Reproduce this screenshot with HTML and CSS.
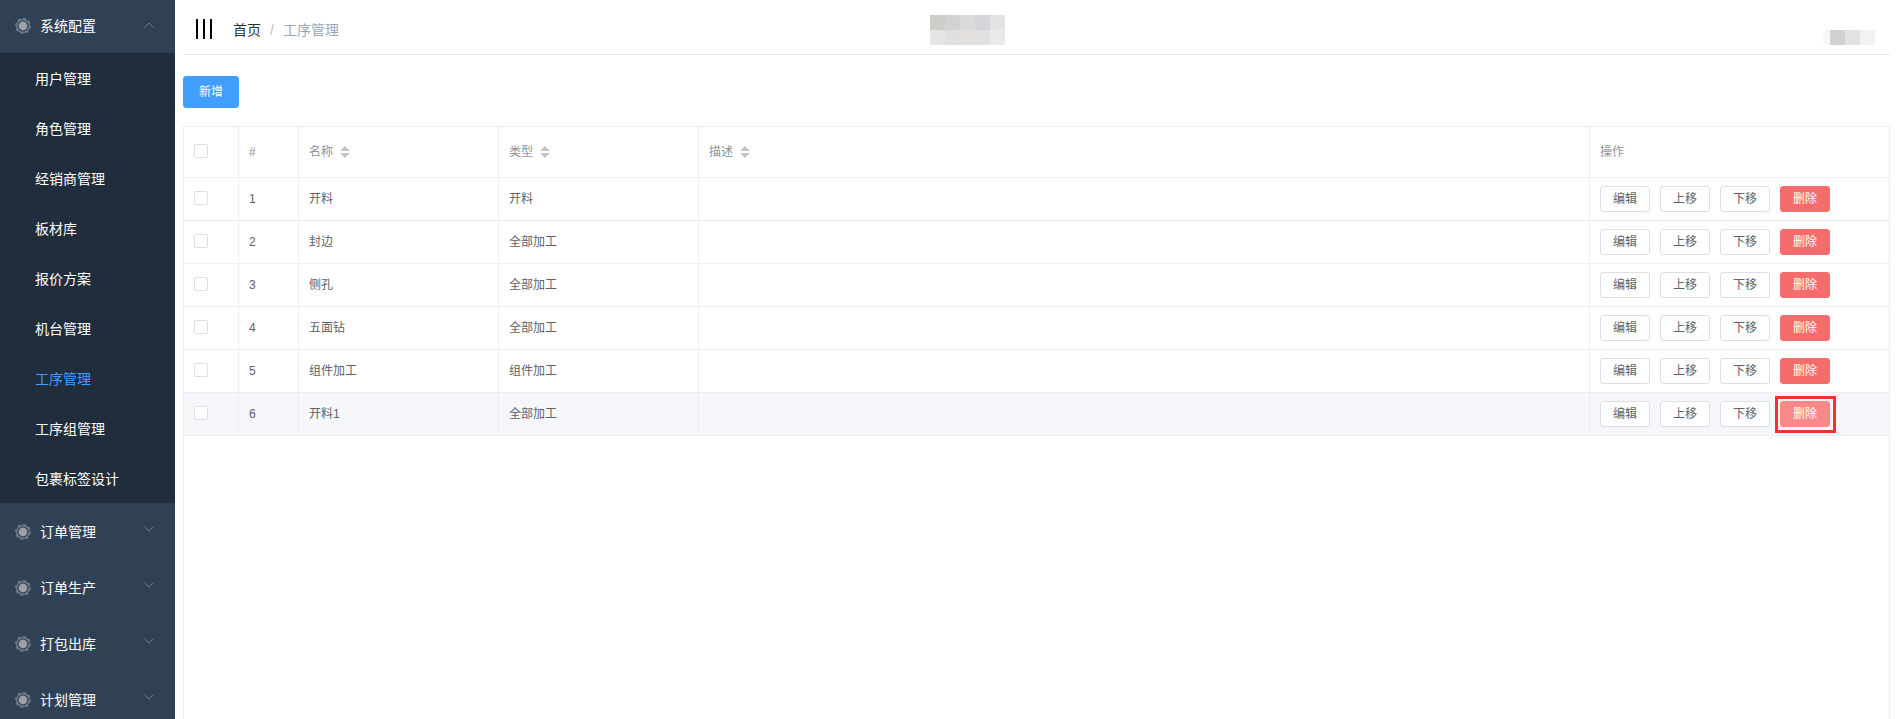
FILE: index.html
```html
<!DOCTYPE html>
<html lang="zh-CN">
<head>
<meta charset="UTF-8">
<title>工序管理</title>
<link rel="stylesheet" href="styles.css">
</head>
<body>
<svg class="defs" width="0" height="0">
  <defs>
    <g id="gear">
      <circle cx="8" cy="8" r="6.3" fill="none" stroke="#7a828e" stroke-width="1.2"/>
      <circle cx="8" cy="8" r="7.3" fill="none" stroke="#7a828e" stroke-width="1.2" stroke-dasharray="2.9 2.83"/>
      <circle cx="8" cy="8" r="4.4" fill="#9da0a6"/>
    </g>
  </defs>
</svg>

<div class="layout">
  <!-- 侧边栏 -->
  <aside class="sidebar">
    <div class="menu-title menu-title-first">
      <svg class="menu-icon" width="16" height="16"><use href="#gear"/></svg>
      <span>系统配置</span>
      <svg class="menu-arrow" width="10" height="6"><polyline points="0.5,5.5 5,1 9.5,5.5" fill="none" stroke="#717c8b"/></svg>
    </div>
    <ul class="submenu">
      <li>用户管理</li>
      <li>角色管理</li>
      <li>经销商管理</li>
      <li>板材库</li>
      <li>报价方案</li>
      <li>机台管理</li>
      <li class="active">工序管理</li>
      <li>工序组管理</li>
      <li>包裹标签设计</li>
    </ul>
    <div class="menu-title">
      <svg class="menu-icon" width="16" height="16"><use href="#gear"/></svg>
      <span>订单管理</span>
      <svg class="menu-arrow" width="10" height="6"><polyline points="0.5,0.5 5,5 9.5,0.5" fill="none" stroke="#717c8b"/></svg>
    </div>
    <div class="menu-title">
      <svg class="menu-icon" width="16" height="16"><use href="#gear"/></svg>
      <span>订单生产</span>
      <svg class="menu-arrow" width="10" height="6"><polyline points="0.5,0.5 5,5 9.5,0.5" fill="none" stroke="#717c8b"/></svg>
    </div>
    <div class="menu-title">
      <svg class="menu-icon" width="16" height="16"><use href="#gear"/></svg>
      <span>打包出库</span>
      <svg class="menu-arrow" width="10" height="6"><polyline points="0.5,0.5 5,5 9.5,0.5" fill="none" stroke="#717c8b"/></svg>
    </div>
    <div class="menu-title">
      <svg class="menu-icon" width="16" height="16"><use href="#gear"/></svg>
      <span>计划管理</span>
      <svg class="menu-arrow" width="10" height="6"><polyline points="0.5,0.5 5,5 9.5,0.5" fill="none" stroke="#717c8b"/></svg>
    </div>
  </aside>

  <main class="main">
    <!-- 顶部 -->
    <header class="navbar">
      <div class="navbar-left">
        <div class="hamburger"><i></i><i></i><i></i></div>
        <div class="breadcrumb">
          <span class="crumb">首页</span>
          <span class="crumb-sep">/</span>
          <span class="crumb-current">工序管理</span>
        </div>
      </div>
      <div class="mosaic-title">
        <i></i><i></i><i></i><i></i><i></i>
        <i></i><i></i><i></i><i></i><i></i>
      </div>
      <div class="mosaic-user"><i></i><i></i><i></i><i></i></div>
    </header>

    <section class="content">
      <button class="btn btn-primary btn-add">新增</button>

      <div class="table-wrap">
        <table class="table">
          <colgroup>
            <col class="col-check"><col class="col-index"><col class="col-name">
            <col class="col-type"><col class="col-desc"><col class="col-ops">
          </colgroup>
          <thead>
            <tr>
              <th><span class="checkbox"></span></th>
              <th>#</th>
              <th><div class="th-sort">名称<span class="sort"><i class="up"></i><i class="down"></i></span></div></th>
              <th><div class="th-sort">类型<span class="sort"><i class="up"></i><i class="down"></i></span></div></th>
              <th><div class="th-sort">描述<span class="sort"><i class="up"></i><i class="down"></i></span></div></th>
              <th>操作</th>
            </tr>
          </thead>
          <tbody>
            <tr>
              <td><span class="checkbox"></span></td><td>1</td><td>开料</td><td>开料</td><td></td>
              <td><div class="ops"><button class="btn">编辑</button><button class="btn">上移</button><button class="btn">下移</button><button class="btn btn-danger">删除</button></div></td>
            </tr>
            <tr>
              <td><span class="checkbox"></span></td><td>2</td><td>封边</td><td>全部加工</td><td></td>
              <td><div class="ops"><button class="btn">编辑</button><button class="btn">上移</button><button class="btn">下移</button><button class="btn btn-danger">删除</button></div></td>
            </tr>
            <tr>
              <td><span class="checkbox"></span></td><td>3</td><td>侧孔</td><td>全部加工</td><td></td>
              <td><div class="ops"><button class="btn">编辑</button><button class="btn">上移</button><button class="btn">下移</button><button class="btn btn-danger">删除</button></div></td>
            </tr>
            <tr>
              <td><span class="checkbox"></span></td><td>4</td><td>五面钻</td><td>全部加工</td><td></td>
              <td><div class="ops"><button class="btn">编辑</button><button class="btn">上移</button><button class="btn">下移</button><button class="btn btn-danger">删除</button></div></td>
            </tr>
            <tr>
              <td><span class="checkbox"></span></td><td>5</td><td>组件加工</td><td>组件加工</td><td></td>
              <td><div class="ops"><button class="btn">编辑</button><button class="btn">上移</button><button class="btn">下移</button><button class="btn btn-danger">删除</button></div></td>
            </tr>
            <tr class="row-hover">
              <td><span class="checkbox"></span></td><td>6</td><td>开料1</td><td>全部加工</td><td></td>
              <td><div class="ops"><button class="btn">编辑</button><button class="btn">上移</button><button class="btn">下移</button><span class="marked"><button class="btn btn-danger btn-danger-hover">删除</button></span></div></td>
            </tr>
          </tbody>
        </table>
      </div>
    </section>
  </main>
</div>
</body>
</html>
```

FILE: styles.css
```css
* { margin: 0; padding: 0; box-sizing: border-box; }

html, body { height: 100%; overflow: hidden; }

body {
  background: #fff;
  color: #606266;
  font-family: "Liberation Sans", "Noto Sans CJK SC", sans-serif;
  font-size: 12px;
  line-height: 20px;
}

.defs { position: absolute; }

.layout { display: flex; height: 100%; }

/* 侧边栏 */
.sidebar {
  width: 175px;
  flex-shrink: 0;
  background: #304156;
  overflow: hidden;
}
.menu-title {
  display: flex;
  align-items: center;
  height: 56px;
  padding: 2px 0 0 15px;
  color: #fff;
  font-size: 14px;
}
.menu-title-first { height: 53px; padding: 0 0 1px 15px; }
.menu-icon { margin-right: 9px; flex-shrink: 0; }
.menu-arrow { margin-left: auto; margin-right: 21px; margin-top: -6px; }
.menu-title-first .menu-arrow { margin-top: -3px; }

.submenu { list-style: none; background: #1f2d3d; }
.submenu li {
  height: 50px;
  line-height: 52px;
  padding-left: 35px;
  color: #fff;
  font-size: 14px;
}
.submenu li.active { color: #409eff; }

/* 主体 */
.main {
  flex: 1;
  min-width: 0;
  display: flex;
  flex-direction: column;
  padding: 0 7px 0 8px;
}
.navbar {
  display: flex;
  height: 55px;
  flex-shrink: 0;
  border-bottom: 1px solid #e6e6e9;
}
.navbar-left {
  width: 747px;
  display: flex;
  align-items: flex-start;
  padding-left: 13px;
}
.hamburger { display: flex; gap: 5px; margin-top: 19px; margin-right: 21px; }
.hamburger i { width: 2px; height: 20px; background: #000; }

.breadcrumb {
  display: flex;
  gap: 9px;
  font-size: 14px;
  margin-top: 20px;
}
.crumb { color: #303133; }
.crumb-sep { color: #c0c4cc; }
.crumb-current { color: #97a8be; }

/* 打码区域 */
.mosaic-title {
  display: grid;
  grid-template-columns: repeat(5, 15px);
  grid-auto-rows: 15px;
  margin-top: 15px;
  height: 30px;
}
.mosaic-title i:nth-child(1) { background: #cfcdca; }
.mosaic-title i:nth-child(2) { background: #d1d3d3; }
.mosaic-title i:nth-child(3) { background: #dcdad8; }
.mosaic-title i:nth-child(4) { background: #d3d5d8; }
.mosaic-title i:nth-child(5) { background: #e3e3e4; }
.mosaic-title i:nth-child(6) { background: #e5e5e5; }
.mosaic-title i:nth-child(7) { background: #dedfe0; }
.mosaic-title i:nth-child(8) { background: #e3e0de; }
.mosaic-title i:nth-child(9) { background: #e0e1e3; }
.mosaic-title i:nth-child(10) { background: #e9eaea; }

.mosaic-user {
  display: grid;
  grid-template-columns: 8px 15px 15px 15px;
  height: 15px;
  margin: 30px 15px 0 auto;
}
.mosaic-user i:nth-child(1) { background: #f8f7f5; border-radius: 8px 0 0 8px; }
.mosaic-user i:nth-child(2) { background: #d0d1d3; }
.mosaic-user i:nth-child(3) { background: #e1e2e4; }
.mosaic-user i:nth-child(4) { background: #f2f2f2; }

.content {
  flex: 1;
  min-height: 0;
  display: flex;
  flex-direction: column;
  padding-top: 21px;
}

/* 按钮 */
.btn {
  display: block;
  width: 50px;
  height: 26px;
  background: #fff;
  border: 1px solid #dcdfe6;
  border-radius: 3px;
  color: #606266;
  font-family: inherit;
  font-size: 12px;
  line-height: 1;
}
.btn-primary { background: #409eff; border-color: #409eff; color: #fff; }
.btn-add { width: 56px; height: 32px; flex-shrink: 0; margin-bottom: 18px; }
.btn-danger { background: #f56c6c; border-color: #f56c6c; color: #fff; }
.btn-danger-hover { background: #f78989; border-color: #f78989; }

/* 表格 */
.table-wrap {
  flex: 1;
  border: 1px solid #ebeef5;
  border-bottom: 0;
}
.table {
  width: 100%;
  table-layout: fixed;
  border-collapse: separate;
  border-spacing: 0;
}
.col-check { width: 55px; }
.col-index { width: 60px; }
.col-name, .col-type { width: 200px; }
.col-ops { width: 299px; }

.table th, .table td {
  padding: 0 10px;
  border-right: 1px solid #ebeef5;
  border-bottom: 1px solid #ebeef5;
  text-align: left;
  vertical-align: middle;
  font-size: 12px;
  font-weight: 400;
}
.table th { height: 51px; color: #909399; }
.table td { height: 43px; color: #606266; }
.table th:last-child, .table td:last-child { border-right: 0; }
.row-hover td { background: #f5f7fa; }

.checkbox {
  display: block;
  width: 14px;
  height: 14px;
  margin-top: -2px;
  background: #fff;
  border: 1px solid #dcdfe6;
  border-radius: 2px;
}

.th-sort { display: flex; align-items: center; }
.sort {
  display: flex;
  flex-direction: column;
  gap: 2px;
  margin-left: 7px;
}
.sort i { width: 0; height: 0; border: 5px solid transparent; }
.sort .up { border-top: 0; border-bottom-color: #c0c4cc; }
.sort .down { border-bottom: 0; border-top-color: #c0c4cc; }

.ops { display: flex; gap: 10px; }

/* 红框标注 */
.marked { position: relative; display: block; height: 26px; }
.marked::after {
  content: "";
  box-sizing: border-box;
  position: absolute;
  left: -5px;
  top: -5px;
  width: 61px;
  height: 37px;
  border: 3px solid #f5302e;
}
```
